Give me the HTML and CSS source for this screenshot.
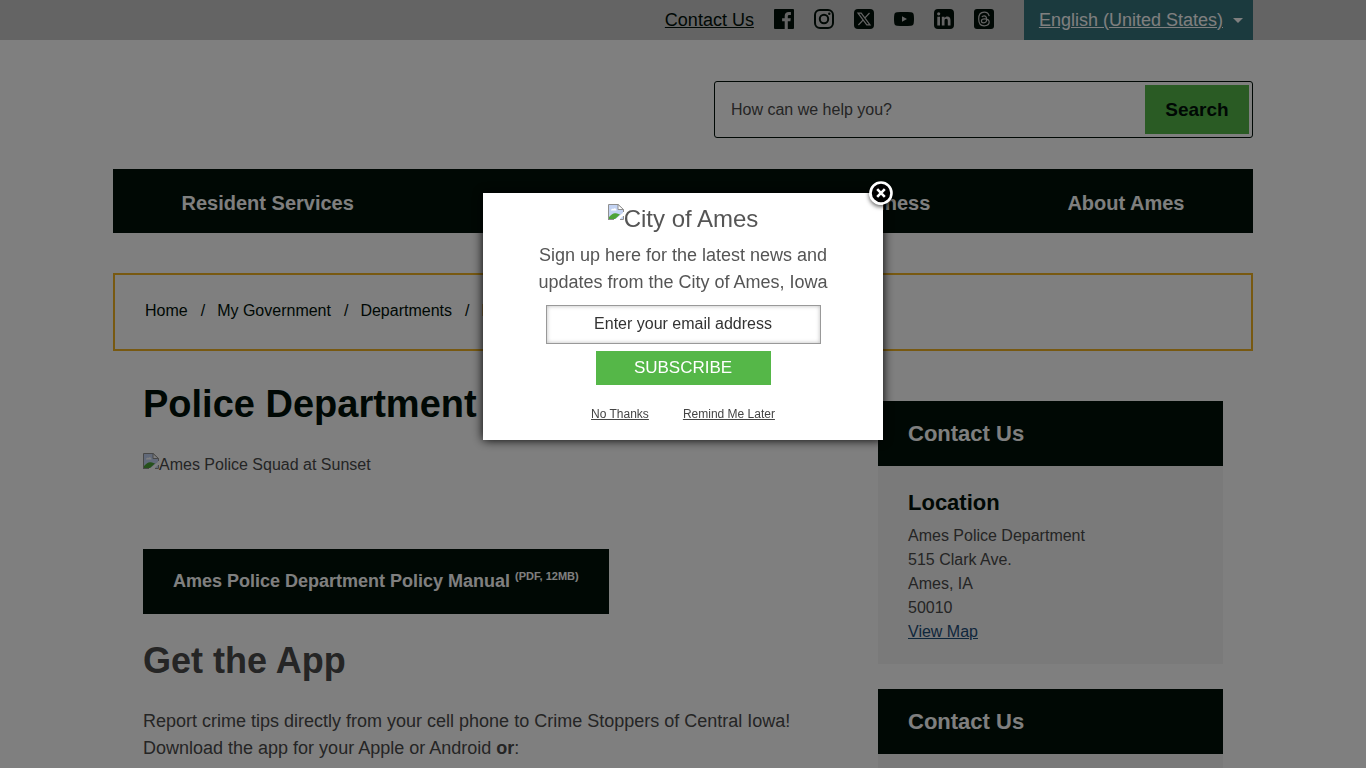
FILE: index.html
```html
<!DOCTYPE html>
<html lang="en">
<head>
    <meta charset="UTF-8">
    <meta name="viewport" content="width=device-width, initial-scale=1.0">
    <title>Police Department | City of Ames, IA</title>
    <link rel="stylesheet" href="styles.css">
</head>
<body>
<div class="topbar">
    <div class="container topbar-inner">
        <a class="topbar-contact" href="#">Contact Us</a>
        <a class="social" href="#" aria-label="Facebook">
            <svg viewBox="0 0 20 20"><path fill-rule="evenodd" d="M1 0h18a1 1 0 0 1 1 1v18a1 1 0 0 1-1 1h-5.200v-7.700h2.600l.4-3h-3V7.400c0-.9.300-1.500 1.500-1.500h1.600V3.200c-.3 0-1.200-.1-2.300-.1-2.300 0-3.900 1.400-3.900 4v2.200H8.100v3h2.600V20H1a1 1 0 0 1-1-1V1a1 1 0 0 1 1-1z"/></svg>
        </a>
        <a class="social" href="#" aria-label="Instagram">
            <svg viewBox="0 0 20 20"><rect class="line" x="1" y="1" width="18" height="18" rx="5"/><circle class="line" cx="10" cy="10" r="4.200"/><circle cx="15.300" cy="4.700" r="1.200"/></svg>
        </a>
        <a class="social" href="#" aria-label="X">
            <svg viewBox="0 0 20 20"><rect width="20" height="20" rx="4"/><path class="cut" d="M4 4.200h3.200l8.800 11.600h-3.200zM15.500 4l-5 5.300M9 11.100l-4.600 4.900"/></svg>
        </a>
        <a class="social" href="#" aria-label="YouTube">
            <svg viewBox="0 0 20 20"><path fill-rule="evenodd" d="M3 3.300c4-.5 10-.5 14 0 1.700.2 2.500 1 2.700 2.500.4 2.800.4 5.600 0 8.400-.2 1.500-1 2.300-2.700 2.500-4 .5-10 .5-14 0-1.700-.2-2.500-1-2.700-2.500-.4-2.800-.4-5.600 0-8.400C.500 4.300 1.300 3.500 3 3.300zM8 7.200v5.600l5-2.800z"/></svg>
        </a>
        <a class="social" href="#" aria-label="LinkedIn">
            <svg viewBox="0 0 20 20"><path fill-rule="evenodd" d="M4 0h12a4 4 0 0 1 4 4v12a4 4 0 0 1-4 4H4a4 4 0 0 1-4-4V4a4 4 0 0 1 4-4zM3.300 7.700V16.500h2.700V7.700zM4.700 3.200a1.600 1.600 0 1 0 0 3.200 1.600 1.600 0 0 0 0-3.200zM7.800 7.700V16.500h2.700v-4.600c0-1.400.6-2.100 1.700-2.100s1.600.8 1.600 2.100v4.600h2.700v-5.100c0-2.500-1.100-3.900-3.100-3.900-1.400 0-2.300.6-2.900 1.500V7.700z"/></svg>
        </a>
        <a class="social" href="#" aria-label="Threads">
            <svg viewBox="0 0 20 20"><rect width="20" height="20" rx="3"/><path class="cut" d="M15.200 7.100C14.600 4.600 12.900 3.200 10.200 3.200 6.500 3.200 4.700 5.800 4.700 10s1.800 6.800 5.500 6.800c2.800 0 5-1.500 5-3.700 0-2-1.800-3.200-4.500-3.200-2 0-3.300.7-3.300 2 0 1.200 1.100 1.900 2.400 1.900 1.800 0 2.900-1.200 2.900-3.500 0-2.200-.9-3.400-2.600-3.400-1.100 0-1.800.4-2.200 1.200"/></svg>
        </a>
        <a class="language" href="#"><span>English (United States)</span></a>
    </div>
</div>

<header class="container">
    <form class="search">
        <input type="search" placeholder="How can we help you?" aria-label="Search the site">
        <button type="button">Search</button>
    </form>
    <nav class="main-nav">
        <a href="#">Resident Services</a>
        <a href="#">My Government</a>
        <a href="#">Doing Business</a>
        <a href="#">About Ames</a>
    </nav>
    <ol class="breadcrumb">
        <li><a href="#">Home</a></li>
        <li><a href="#">My Government</a></li>
        <li><a href="#">Departments</a></li>
        <li>Police Department</li>
    </ol>
</header>

<div class="container page">
    <main>
        <h1>Police Department</h1>
        <div class="photo">
            <svg class="missing" viewBox="0 0 16 16"><path fill="#c3d3f3" d="M1 1h9l5 5v9H1z"/><path fill="#fff" d="M3 6.500c0-2 2-2 2.500-1.500C6 3.500 8.500 4 8.500 6.500z"/><path fill="#4da338" d="M1 15v-2c3-3.500 5-4.500 8-3.500l3 1L7 15z"/><path fill="#fff" d="M6.500 16L16 8v3l-5 5z"/><path fill="none" stroke="#8f8f8f" d="M.500 16V.5H10l5.500 5V8"/><path fill="#fff" stroke="#8f8f8f" d="M10 .5v5h5.500z"/><path fill="none" stroke="#8f8f8f" d="M.500 15.500H6M12 15.500h3.500V12"/></svg><span>Ames Police Squad at Sunset</span>
        </div>
        <a class="document" href="#">Ames Police Department Policy Manual <small>(PDF, 12MB)</small></a>
        <h2>Get the App</h2>
        <p>Report crime tips directly from your cell phone to Crime Stoppers of Central Iowa! Download the app for your Apple or Android <strong>or</strong>:</p>
    </main>
    <aside>
        <section class="panel">
            <h2>Contact Us</h2>
            <div class="panel-body">
                <h3>Location</h3>
                <address>
                    Ames Police Department<br>
                    515 Clark Ave.<br>
                    Ames, IA<br>
                    50010<br>
                    <a href="#">View Map</a>
                </address>
            </div>
        </section>
        <section class="panel">
            <h2>Contact Us</h2>
            <div class="panel-body"></div>
        </section>
    </aside>
</div>

<div class="overlay">
    <div class="popup" role="dialog" aria-label="Newsletter sign up">
        <button class="close" type="button" aria-label="Close">
            <svg viewBox="0 0 24 24"><circle cx="12" cy="12" r="10.500"/><path d="M8.200 8.200l7.600 7.600M15.800 8.200l-7.600 7.600"/></svg>
        </button>
        <div class="popup-logo">
            <svg class="missing" viewBox="0 0 16 16"><path fill="#c3d3f3" d="M1 1h9l5 5v9H1z"/><path fill="#fff" d="M3 6.500c0-2 2-2 2.500-1.500C6 3.500 8.500 4 8.500 6.500z"/><path fill="#4da338" d="M1 15v-2c3-3.500 5-4.500 8-3.500l3 1L7 15z"/><path fill="#fff" d="M6.500 16L16 8v3l-5 5z"/><path fill="none" stroke="#8f8f8f" d="M.500 16V.5H10l5.500 5V8"/><path fill="#fff" stroke="#8f8f8f" d="M10 .5v5h5.500z"/><path fill="none" stroke="#8f8f8f" d="M.500 15.500H6M12 15.500h3.500V12"/></svg><span>City of Ames</span>
        </div>
        <p>Sign up here for the latest news and updates from the City of Ames, Iowa</p>
        <form>
            <input type="email" placeholder="Enter your email address" aria-label="Email address">
            <button class="subscribe" type="button">SUBSCRIBE</button>
        </form>
        <div class="popup-links">
            <a href="#">No Thanks</a>
            <a href="#">Remind Me Later</a>
        </div>
    </div>
</div>
</body>
</html>
```
FILE: styles.css
```css
* {
    box-sizing: border-box;
}

body {
    margin: 0;
    overflow: hidden;
    font-family: "Liberation Sans", Arial, sans-serif;
    font-size: 18px;
    line-height: 27px;
    color: #4a4a4a;
    background: #fff;
}

.container {
    max-width: 1140px;
    margin: 0 auto;
}

.topbar {
    background: #c8c8c8;
}

.topbar-inner {
    display: flex;
    justify-content: flex-end;
    align-items: center;
    gap: 20px;
    height: 40px;
}

.topbar-contact {
    color: #001008;
}

.social svg {
    display: block;
    width: 20px;
    height: 20px;
    margin-bottom: 2px;
    fill: #001008;
}

.social .line {
    fill: none;
    stroke: #001008;
    stroke-width: 2;
}

.social .cut {
    fill: none;
    stroke: #c8c8c8;
    stroke-width: 1.2;
}

.language {
    display: flex;
    align-items: center;
    gap: 10px;
    height: 40px;
    margin-left: 10px;
    padding: 0 10px 0 15px;
    color: #fff;
    background: #36747c;
}

.language::after {
    content: "";
    border: 5px solid transparent;
    border-top-color: #fff;
    border-bottom: 0;
}

.search {
    display: flex;
    width: 539px;
    max-width: 100%;
    height: 57px;
    margin: 41px 0 31px auto;
    padding: 3px;
    border: 1px solid #001008;
    border-radius: 3px;
}

.search input {
    flex: 1;
    padding: 0 13px;
    border: 0;
    font: inherit;
    font-size: 16px;
    background: none;
}

.search input::placeholder {
    color: #4a4a4a;
}

.search button {
    width: 104px;
    padding: 0;
    border: 0;
    font: inherit;
    font-size: 19px;
    font-weight: bold;
    color: #001008;
    background: #55b748;
}

.main-nav {
    display: flex;
    justify-content: space-around;
    align-items: center;
    height: 64px;
    padding-top: 4px;
    background: #001008;
}

.main-nav a {
    font-size: 20px;
    font-weight: bold;
    color: #fff;
    text-decoration: none;
}

.breadcrumb {
    display: flex;
    gap: 13px;
    margin: 40px 0 0;
    padding: 23px 30px 25px;
    border: 2px solid #f0b323;
    list-style: none;
    font-size: 16px;
    line-height: 26px;
    color: #001008;
}

.breadcrumb a {
    color: inherit;
    text-decoration: none;
}

.breadcrumb li + li::before {
    content: "/";
    margin-right: 12px;
}

.page {
    display: flex;
    justify-content: space-between;
    padding: 0 30px;
}

main {
    flex: 1;
    max-width: 675px;
}

h1 {
    margin: 29px 0 25px;
    font-size: 38px;
    line-height: 48px;
    color: #001008;
}

.missing {
    flex: none;
    width: 16px;
    height: 16px;
}

.photo {
    display: flex;
    height: 96px;
    font-size: 16px;
    line-height: 24px;
}

.document {
    display: inline-block;
    padding: 19px 30px;
    font-weight: bold;
    color: #fff;
    background: #001008;
    text-decoration: none;
}

.document small {
    font-size: 11px;
    line-height: 0;
    vertical-align: super;
}

main h2 {
    margin: 24px 0 25px;
    font-size: 36px;
    line-height: 45px;
}

main p {
    margin: 0;
}

aside {
    width: 345px;
    margin-top: 50px;
}

.panel {
    margin-bottom: 25px;
    background: #f4f4f4;
}

.panel h2 {
    margin: 0;
    padding: 20px 30px;
    font-size: 22px;
    line-height: 25px;
    color: #fff;
    background: #001008;
}

.panel-body {
    min-height: 198px;
    padding: 24px 30px 20px;
}

.panel h3 {
    margin: 0 0 9px;
    font-size: 22px;
    line-height: 25px;
    color: #001008;
}

address {
    font-size: 16px;
    font-style: normal;
    line-height: 24px;
}

address a {
    color: #1f4e79;
}

.overlay {
    position: fixed;
    inset: 0;
    display: flex;
    justify-content: center;
    align-items: flex-start;
    padding-top: 193px;
    background: rgba(0, 0, 0, 0.5);
}

.popup {
    position: relative;
    width: 400px;
    padding: 11px 40px 12px;
    text-align: center;
    color: #555;
    background: #fff;
    box-shadow: 0 0 10px #000;
}

.close {
    position: absolute;
    top: -12px;
    right: -10px;
    width: 24px;
    height: 24px;
    padding: 0;
    border: 0;
    border-radius: 50%;
    background: none;
    box-shadow: 0 2px 4px rgba(0, 0, 0, 0.6);
}

.close svg {
    display: block;
    fill: #000;
    stroke: #fff;
    stroke-width: 2.6;
}

.popup-logo {
    display: flex;
    justify-content: center;
    font-size: 24px;
    line-height: 30px;
}

.popup p {
    margin: 8px 0 9px;
}

.popup form {
    display: flex;
    flex-direction: column;
    align-items: center;
    gap: 7px;
}

.popup input {
    width: 275px;
    height: 39px;
    padding: 0 2px 2px;
    border: 1px solid #999;
    font: inherit;
    font-size: 16px;
    text-align: center;
    box-shadow: inset 0 0 4px #bbb;
}

.popup input::placeholder {
    color: #333;
}

.subscribe {
    width: 175px;
    height: 34px;
    padding: 0 0 2px;
    border: 0;
    font: inherit;
    font-size: 17px;
    color: #fff;
    background: #55b748;
}

.popup-links {
    display: flex;
    justify-content: center;
    gap: 34px;
    margin-top: 16px;
    font-size: 12px;
}

.popup-links a {
    color: #444;
}
```
